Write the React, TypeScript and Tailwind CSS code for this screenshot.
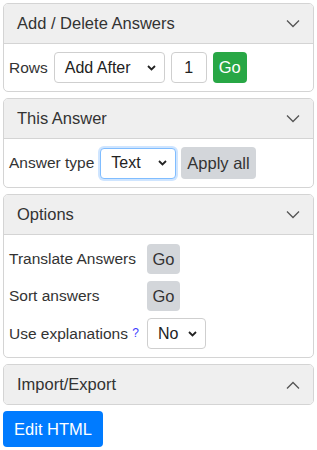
import React from "react";

const Chevron = ({ up = false }: { up?: boolean }) => (
  <svg width="14" height="8" viewBox="0 0 14 8" className="mr-[1px]">
    <path
      d={up ? "M1 7.5 L7 1.5 L13 7.5" : "M1 0.5 L7 6.5 L13 0.5"}
      fill="none"
      stroke="#555"
      strokeWidth="1.3"
    />
  </svg>
);

const SelArrow = () => (
  <svg width="9" height="6" viewBox="0 0 9 6" className="absolute pointer-events-none" style={{ right: 8, top: "50%", marginTop: -3 }}>
    <path d="M1 1 L4.5 4.5 L8 1" fill="none" stroke="#222" strokeWidth="1.8" />
  </svg>
);

const Header = ({ title, up = false }: { title: string; up?: boolean }) => (
  <div className="flex items-center justify-between h-[39px] pl-[13px] pr-[12px] bg-[#efefef] text-[16.5px] text-[#333]">
    <span>{title}</span>
    <Chevron up={up} />
  </div>
);

const Select = ({ label, w, focus = false }: { label: string; w: number; focus?: boolean }) => (
  <div
    className={
      "relative h-[31px] rounded-[4px] bg-white flex items-center pl-[10px] text-[16px] text-[#222] " +
      (focus ? "border border-[#80bdff] shadow-[0_0_0_2px_#cfe5ff]" : "border border-[#cfcfcf]")
    }
    style={{ width: w }}
  >
    {label}
    <SelArrow />
  </div>
);

export default function App() {
  return (
    <div className="p-[3px] bg-white text-[15.5px] text-[#333]" style={{ fontFamily: '"Liberation Sans", Arial, sans-serif' }}>
      {/* Card 1 */}
      <div className="border border-[#d4d4d4] rounded-[5px] overflow-hidden mb-[6px]">
        <Header title="Add / Delete Answers" />
        <div className="border-t border-[#d4d4d4] flex items-center px-[5px] h-[48px]">
          <span className="mr-[6px]">Rows</span>
          <Select label="Add After" w={111} />
          <div className="ml-[6px] w-[36px] h-[31px] border border-[#cfcfcf] rounded-[4px] flex items-center justify-center text-[16px] text-[#222]">1</div>
          <div className="ml-[6px] w-[34px] h-[31px] rounded-[4px] bg-[#28a745] text-white flex items-center justify-center text-[16.5px]">Go</div>
        </div>
      </div>

      {/* Card 2 */}
      <div className="border border-[#d4d4d4] rounded-[5px] overflow-hidden mb-[6px]">
        <Header title="This Answer" />
        <div className="border-t border-[#d4d4d4] flex items-center px-[5px] h-[49px]">
          <span className="mr-[6px]">Answer type</span>
          <Select label="Text" w={76} focus />
          <div className="ml-[5px] h-[32px] px-[6px] rounded-[4px] bg-[#d3d6da] text-[#333] flex items-center text-[16.5px]">Apply all</div>
        </div>
      </div>

      {/* Card 3 */}
      <div className="border border-[#d4d4d4] rounded-[5px] overflow-hidden mb-[6px]">
        <Header title="Options" />
        <div className="border-t border-[#d4d4d4] px-[5px] pt-[9px] pb-[8px] grid grid-cols-[auto_1fr] gap-x-[8px] gap-y-[7px] items-center">
          <span>Translate Answers</span>
          <div className="w-[33px] h-[30px] rounded-[4px] bg-[#d3d6da] flex items-center justify-center text-[16.5px]">Go</div>
          <span>Sort answers</span>
          <div className="w-[33px] h-[30px] rounded-[4px] bg-[#d3d6da] flex items-center justify-center text-[16.5px]">Go</div>
          <span>
            Use explanations <sup className="text-[#3b3bff] text-[12px] relative -top-[2px]">?</sup>
          </span>
          <Select label="No" w={59} />
        </div>
      </div>

      {/* Card 4 */}
      <div className="border border-[#d4d4d4] rounded-[5px] overflow-hidden mb-[6px]">
        <Header title="Import/Export" up />
      </div>

      <div className="w-[100px] h-[36px] rounded-[4px] bg-[#007bff] text-white flex items-center justify-center text-[16.5px]">
        Edit HTML
      </div>
    </div>
  );
}
